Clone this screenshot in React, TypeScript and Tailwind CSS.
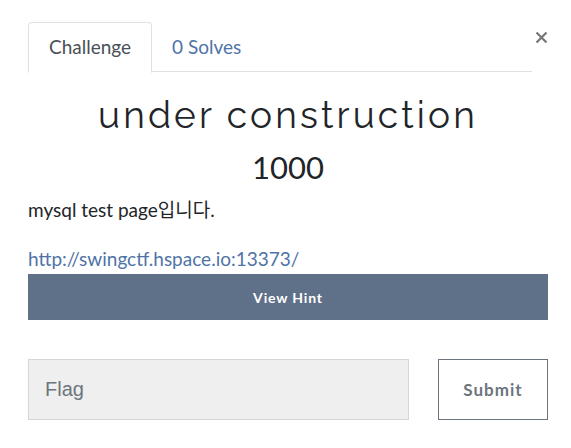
import { useState } from 'react';

export default function App() {
  const [flag, setFlag] = useState('');

  return (
    <div className="w-[571px] h-[448px] bg-white font-['Lato',sans-serif] text-[#212529]">
      <div className="ml-[28px] w-[520px] pt-[22px]">
        {/* Tabs */}
        <div className="flex items-start">
          <div className="flex flex-1 h-[50px] border-b border-[#dee2e6]">
            <div className="h-[51px] px-[20px] flex items-center border border-[#dee2e6] border-b-white rounded-t-[4px] bg-white text-[19px] text-[#495057]">
              Challenge
            </div>
            <div className="h-[50px] px-[20px] flex items-center text-[19px] text-[#4f73a8]">0 Solves</div>
          </div>
          <button className="w-[16px] h-[16px] mt-[7px] flex items-center justify-end text-[#777]">
            <svg width="13" height="13" viewBox="0 0 13 13" fill="none" stroke="currentColor" strokeWidth="2.2">
              <path d="M1.5 1.5 L11.5 11.5 M11.5 1.5 L1.5 11.5" />
            </svg>
          </button>
        </div>

        {/* Title */}
        <h2 className="mt-[21px] text-center text-[37px] leading-[44px] tracking-[0.085em] text-[#212529] font-['Raleway','Lato',sans-serif]">
          under construction
        </h2>
        <h3 className="mt-[10px] text-center text-[31px] leading-[40px] text-[#212529]">1000</h3>

        {/* Description */}
        <p className="mt-[10px] text-[19px] leading-[26px] font-['Lato','Noto_Sans_CJK_KR',sans-serif]">
          mysql test page입니다.
        </p>
        <a href="#" className="block mt-[23px] text-[19px] leading-[26px] text-[#4f73a8]">
          http://swingctf.hspace.io:13373/
        </a>

        <button className="mt-[2px] w-full h-[46px] bg-[#5f7089] text-white text-[14px] font-bold tracking-[0.06em]">
          View Hint
        </button>

        {/* Flag form */}
        <div className="mt-[39px] flex">
          <input
            value={flag}
            onChange={(e) => setFlag(e.target.value)}
            placeholder="Flag"
            className="w-[381px] h-[61px] px-[16px] bg-[#efefef] border border-[#d3d6da] text-[20px] font-['Liberation_Sans',sans-serif] placeholder:text-[#6c757d] outline-none"
          />
          <button className="ml-auto w-[110px] h-[61px] border border-[#6c757d] text-[#6c757d] text-[17px] font-bold tracking-[0.06em]">
            Submit
          </button>
        </div>
      </div>
    </div>
  );
}
